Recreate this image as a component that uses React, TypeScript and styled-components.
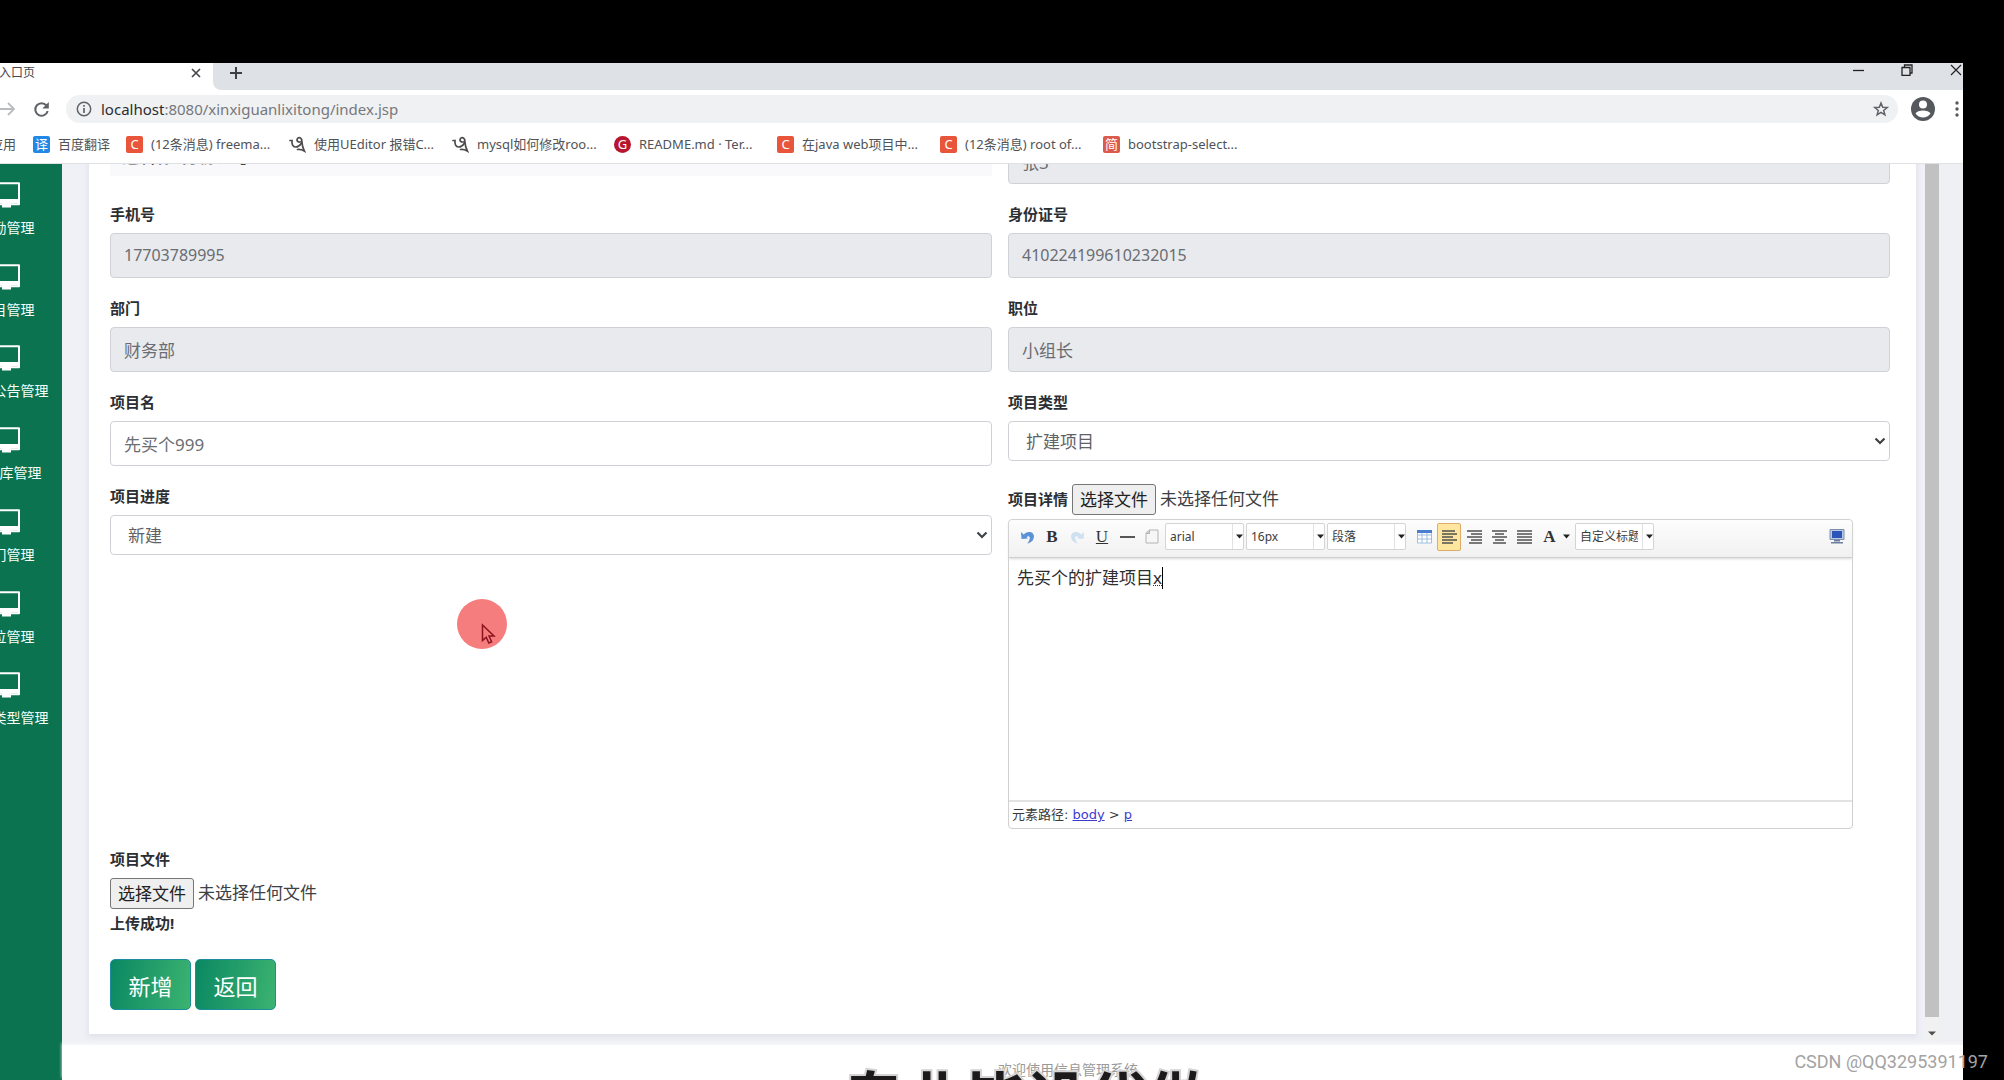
import React from "react";
import styled, { createGlobalStyle } from "styled-components";

const GlobalStyle = createGlobalStyle`
  *, *::before, *::after { box-sizing: border-box; }
  body {
    margin: 0;
    background: #000;
    font-family: "Noto Sans", "Noto Sans CJK SC", sans-serif;
    color: #212529;
  }
  button, input, select { font-family: inherit; margin: 0; }
`;

const Screen = styled.div`
  position: relative;
  height: 100vh;
  padding: 63px 41px 0 0;
  background: #000;
  overflow: hidden;
`;

const Browser = styled.div`
  display: flex;
  flex-direction: column;
  height: 100%;
  background: #fff;
  overflow: hidden;
`;

/* ---------- browser chrome ---------- */

const TabStrip = styled.div`
  display: flex;
  height: 27px;
  flex: none;
  background: #fff;
`;

const Tab = styled.div`
  display: flex;
  align-items: center;
  justify-content: space-between;
  width: 213px;
  padding: 0 9px 7px 0;
  background: #fff;
  font-size: 12px;
  line-height: 20px;
  color: #45484c;
  overflow: hidden;
`;

const TabTitle = styled.span`
  margin-left: -1px;
`;

const PlainButton = styled.button`
  display: flex;
  align-items: center;
  justify-content: center;
  padding: 0;
  border: 0;
  background: none;
  color: inherit;
`;

const StripRest = styled.div`
  display: flex;
  flex: 1;
  align-items: center;
  justify-content: space-between;
  padding: 0 1px 7px 16px;
  background: #dee1e6;
  border-bottom-left-radius: 8px;
  color: #3c4043;
`;

const WindowButtons = styled.div`
  display: flex;
  gap: 37px;
  padding-bottom: 6px;
`;

const AddressRow = styled.div`
  display: flex;
  align-items: center;
  flex: none;
  height: 38px;
  color: #5f6368;
`;

const NavButtons = styled.div`
  display: flex;
  align-items: center;
  gap: 17px;
  width: 66px;
`;

const AddressPill = styled.div`
  display: flex;
  align-items: center;
  flex: 1;
  gap: 9px;
  height: 28px;
  padding: 0 9px 0 10px;
  border-radius: 14px;
  background: #f0f1f3;
`;

const Url = styled.div`
  flex: 1;
  font-size: 15px;
  line-height: 24px;
  color: #75787c;

  b {
    font-weight: 400;
    color: #2b2d30;
  }
`;

const ProfileButtons = styled.div`
  display: flex;
  align-items: center;
  justify-content: space-between;
  width: 65px;
  padding: 0 4px 0 13px;
`;

const Bookmarks = styled.nav`
  display: flex;
  align-items: center;
  flex: none;
  height: 36px;
  padding-bottom: 3px;
  border-bottom: 1px solid #dfe1e5;
`;

const Bookmark = styled.a<{ $width: number }>`
  display: flex;
  align-items: center;
  gap: 8px;
  width: ${(p) => p.$width}px;
  font-size: 13px;
  line-height: 20px;
  color: #505357;
  text-decoration: none;
  white-space: nowrap;
`;

const AppsLink = styled(Bookmark)`
  margin-left: -10px;
`;

const SiteIcon = styled.span<{ $bg: string; $round?: boolean }>`
  display: flex;
  align-items: center;
  justify-content: center;
  flex: none;
  width: 17px;
  height: 17px;
  border-radius: ${(p) => (p.$round ? "9px" : "2px")};
  background: ${(p) => p.$bg};
  color: #fff;
  font-size: 13px;
  line-height: 16px;
`;

/* ---------- page ---------- */

const Page = styled.div`
  display: flex;
  flex: 1;
  min-height: 0;
`;

const Sidebar = styled.aside`
  display: flex;
  justify-content: flex-end;
  align-items: flex-start;
  flex: none;
  width: 62px;
  background: #0b7350;
  overflow: hidden;
`;

const Menu = styled.ul`
  display: grid;
  grid-template-rows: repeat(7, 1fr);
  flex: none;
  width: 111px;
  height: 589px;
  margin: 0;
  padding: 17px 0 0;
  list-style: none;
`;

const MenuLink = styled.a`
  display: flex;
  flex-direction: column;
  align-items: center;
  gap: 9px;
  padding-top: 1px;
  font-size: 14px;
  line-height: 22px;
  color: #f4fffa;
  text-decoration: none;
  white-space: nowrap;
`;

const Main = styled.main`
  display: flex;
  flex-direction: column;
  flex: 1;
  min-width: 0;
`;

const Panel = styled.div`
  display: flex;
  flex: 1;
  min-height: 0;
  background: #f0f1f6;
  overflow: hidden;
`;

const CardArea = styled.div`
  flex: 1;
  min-width: 0;
  padding: 0 9px 0 27px;
`;

const Card = styled.form`
  padding: 0 26px 24px 21px;
  background: #fff;
  box-shadow: 0 2px 6px 1px #dfe0e9;
`;

const ScrollTrack = styled.div`
  display: flex;
  flex-direction: column;
  flex: none;
  width: 14px;
  background: #f1f1f2;
`;

const ScrollThumb = styled.div`
  flex: 1;
  background: #c1c1c1;
`;

const ScrollArrow = styled.div`
  display: flex;
  align-items: center;
  justify-content: center;
  height: 28px;
  padding-top: 4px;
`;

const Gutter = styled.div`
  flex: none;
  width: 24px;
  background: #eff0f3;
`;

const Rows = styled.div`
  display: grid;
  grid-template-columns: 1fr 1fr;
  gap: 18px 16px;
  margin-top: -56px;
`;

const Field = styled.div`
  min-width: 0;
`;

const Label = styled.label`
  display: block;
  margin-bottom: 7px;
  font-size: 15px;
  line-height: 24px;
  font-weight: 700;
  color: #2b2e33;
`;

const TextInput = styled.input<{ $digits?: boolean }>`
  display: block;
  width: 100%;
  height: 45px;
  padding: 0 13px 1px;
  border: 1px solid #ced1d6;
  border-radius: 4px;
  background: #fff;
  font-size: ${(p) => (p.$digits ? 16 : 17)}px;
  line-height: 24px;
  color: #6a6d72;
  outline: none;

  &:read-only { background: #e8eaee; }
`;

const SelectBox = styled.div`
  position: relative;

  svg {
    position: absolute;
    right: 4px;
    top: 15px;
    pointer-events: none;
  }
`;

const Select = styled.select`
  appearance: none;
  display: block;
  width: 100%;
  height: 40px;
  padding: 0 17px;
  border: 1px solid #ced1d6;
  border-radius: 4px;
  background: #fff;
  font-size: 17px;
  color: #5f6267;
`;

const Heading = styled.h4`
  height: 68px;
  margin: 0;
  padding: 37px 12px 0;
  background: #f9f9fc;
  font-size: 17px;
  line-height: 24px;
  font-weight: 500;
  color: #43464b;
`;

const FileLine = styled.div`
  display: flex;
  align-items: center;
  gap: 4px;
  height: 30px;
  font-size: 17px;
  line-height: 24px;
  color: #3e4044;
`;

const InlineLabel = styled(Label)`
  margin: 0;
`;

const HiddenFile = styled.input`
  position: absolute;
  width: 1px;
  height: 1px;
  opacity: 0;
`;

const FileButton = styled.label`
  padding: 2px 7px;
  border: 1px solid #767676;
  border-radius: 3px;
  background: #efefef;
  font-size: 17px;
  line-height: 25px;
  color: #222;
`;

/* ---------- rich text editor ---------- */

const Editor = styled.div`
  display: flex;
  flex-direction: column;
  width: 845px;
  max-width: 100%;
  height: 310px;
  margin-top: 5px;
  border: 1px solid #d0d0d0;
  border-radius: 4px;
  background: #fff;
`;

const Toolbar = styled.div`
  display: flex;
  align-items: center;
  flex: none;
  height: 38px;
  padding: 0 2px 4px 6px;
  border-bottom: 1px solid #d0d0d0;
  border-radius: 4px 4px 0 0;
  background: linear-gradient(#fdfdfd, #f1f1f1);
  box-shadow: 0 1px 3px #d8d8d8;
`;

const Tool = styled(PlainButton)<{ $active?: boolean }>`
  flex: none;
  width: 24px;
  height: 28px;
  margin-right: 1px;
  border: 1px solid ${(p) => (p.$active ? "#dcac6c" : "transparent")};
  border-radius: 2px;
  background: ${(p) => (p.$active ? "#ffe69f" : "none")};
  color: #333;
  font: 700 17px "Liberation Serif", serif;

  u { font-weight: 400; }
`;

const ColorTool = styled(Tool)`
  width: 37px;
  gap: 7px;
  padding-left: 2px;
`;

const ToolGap = styled.span`
  flex: none;
  width: 4px;
`;

const Combo = styled.div`
  position: relative;
  flex: none;
  width: 79px;
  height: 27px;
  margin-right: 2px;
  border: 1px solid #d4d4d4;
  border-radius: 2px;
  background: #fff;

  svg {
    position: absolute;
    right: 0;
    top: 10px;
    pointer-events: none;
  }
`;

const ComboSelect = styled.select`
  appearance: none;
  width: 67px;
  height: 25px;
  padding: 0 4px;
  border: 0;
  border-right: 1px solid #e2e2e2;
  background: none;
  font-size: 12px;
  color: #3c3c3c;
`;

const Spring = styled.span`
  flex: 1;
`;

const EditorBody = styled.div`
  flex: 1;
  padding: 7px 8px;
  font-size: 17px;
  line-height: 26px;
  color: #2e2e2e;

  p { margin: 0; display: flex; align-items: center; }
  u { text-decoration-style: dotted; text-decoration-thickness: 1px; }
`;

const Caret = styled.span`
  width: 1px;
  height: 22px;
  background: #000;
`;

const PathBar = styled.div`
  flex: none;
  height: 28px;
  padding: 0 3px;
  border-top: 2px solid #e2e2e2;
  font: 13px/26px "DejaVu Sans", "Noto Sans CJK SC", sans-serif;
  color: #3a3a3a;

  a { color: #3d3ad0; }
`;

const FileMessage = styled.div`
  margin: 3px 0 24px;
  font-size: 15px;
  line-height: 24px;
  font-weight: 700;
  color: #2b2e33;
`;

const Actions = styled.div`
  display: flex;
  gap: 4px;
`;

const ActionButton = styled.button`
  width: 81px;
  height: 51px;
  padding: 0;
  border: 1px solid #1c8d9c;
  border-radius: 5px;
  background: linear-gradient(100deg, #0a8862, #3cb371);
  font-size: 22px;
  color: #fff;
`;

const Footer = styled.footer`
  flex: none;
  height: 35px;
  padding-top: 14px;
  padding-left: 111px;
  text-align: center;
  font-size: 14px;
  line-height: 22px;
  color: #999;
  box-shadow: 0 -2px 3px #f7f7fa;
`;

/* ---------- screen overlays ---------- */

const Pointer = styled.div`
  position: absolute;
  left: 457px;
  top: 599px;
  width: 50px;
  height: 50px;
  border-radius: 50%;
  background: #f57d7d;

  svg { position: absolute; left: 24px; top: 24px; }
`;

const Caption = styled.div`
  position: absolute;
  left: 843px;
  top: 1065px;
  font: 700 61px/64px "Noto Sans CJK SC", sans-serif;
  color: #1c1a1b;
  white-space: nowrap;
  -webkit-text-stroke: 4px #d4d4d4;
  paint-order: stroke fill;
`;

const Watermark = styled.div`
  position: absolute;
  right: 16px;
  bottom: 5px;
  font: 18px/26px Roboto, sans-serif;
  color: #a3a3a3;
`;

/* ---------- icons ---------- */

const Monitor = () => (
  <svg width="29" height="26" viewBox="0 0 29 26" fill="none">
    <path d="M2 1.2h25v21H2z" stroke="#fff" strokeWidth="2" strokeLinejoin="round" />
    <path d="M1 17h27v4.500H1zM10 21h9v4.500h-9z" fill="#fff" />
  </svg>
);

const Chevron = () => (
  <svg width="12" height="10" viewBox="0 0 12 10" fill="none" stroke="#3f4246" strokeWidth="2.200">
    <path d="M1.500 2.500L6 7l4.500-4.500" />
  </svg>
);

const Down = () => (
  <svg width="7" height="5" viewBox="0 0 7 5"><path d="M0 .5h7L3.500 4.500z" fill="#222" /></svg>
);

const Lines = ({ rows }: { rows: number[][] }) => (
  <svg width="15" height="14" viewBox="0 0 15 14" stroke="#444" strokeWidth="1.400">
    {rows.map(([a, b], i) => (
      <path key={i} d={`M${a} ${1 + i * 3}H${b}`} />
    ))}
  </svg>
);

const Knot = () => (
  <svg width="17" height="17" viewBox="0 0 17 17" fill="none" stroke="#4b4b4d" strokeWidth="1.700" strokeLinecap="round">
    <path d="M1 4.500h2c-.4 3.500.8 6.500 3.500 6.500 2.500 0 4.500-1.500 6-4" />
    <path d="M12.800 6.500c.3-3-.8-5-2.800-4.800-2 .2-2.600 2.700-1.200 3.800 1.300 1 3.200.4 4-.5.3 4 1 7 2.500 10-2.300-1.300-4.300-1.800-6.800-1.500" />
  </svg>
);

const Undo = ({ color, flip }: { color: string; flip?: boolean }) => (
  <svg width="15" height="14" viewBox="0 0 15 14" fill="none">
    <g transform={flip ? "translate(15 0) scale(-1 1)" : undefined}>
      <path d="M4 5c2.500-3.500 9-3.500 9.300 1 .2 3-2 5.500-4.500 6.500 1.200-1.800 2.200-3.700 1.500-5.500C9.500 5 7 5.500 5.500 7.500" fill={color} stroke={color} strokeWidth="1.200" />
      <path d="M1 2l.5 7L8 8.500z" fill={color} />
    </g>
  </svg>
);

const bookmarks: { text: string; icon: React.ReactNode; width: number }[] = [
  { text: "百度翻译", width: 93, icon: <SiteIcon $bg="#2288e6">译</SiteIcon> },
  { text: "(12条消息) freema...", width: 163, icon: <SiteIcon $bg="#e8553a">C</SiteIcon> },
  { text: "使用UEditor 报错C...", width: 163, icon: <Knot /> },
  { text: "mysql如何修改roo...", width: 162, icon: <Knot /> },
  { text: "README.md · Ter...", width: 163, icon: <SiteIcon $bg="#b8152f" $round>G</SiteIcon> },
  { text: "在java web项目中...", width: 163, icon: <SiteIcon $bg="#e8553a">C</SiteIcon> },
  { text: "(12条消息) root of...", width: 163, icon: <SiteIcon $bg="#e8553a">C</SiteIcon> },
  { text: "bootstrap-select...", width: 163, icon: <SiteIcon $bg="#dc5a4c">简</SiteIcon> },
];

const menu = ["奖励管理", "项目管理", "通知公告管理", "资料库管理", "部门管理", "职位管理", "项目类型管理"];

const ComboBox = ({ label, value }: { label: string; value: string }) => (
  <Combo>
    <ComboSelect aria-label={label}>
      <option>{value}</option>
    </ComboSelect>
    <Down />
  </Combo>
);

const Chrome = () => (
  <>
    <TabStrip>
      <Tab>
        <TabTitle>入口页</TabTitle>
        <PlainButton aria-label="关闭标签页">
          <svg width="16" height="12" viewBox="0 0 16 12" stroke="#45484c" strokeWidth="1.700">
            <path d="M4 2l8 8M12 2l-8 8" />
          </svg>
        </PlainButton>
      </Tab>
      <StripRest>
        <PlainButton aria-label="新标签页">
          <svg width="14" height="14" viewBox="0 0 14 14" stroke="#3c4043" strokeWidth="2">
            <path d="M7 1v12M1 7h12" />
          </svg>
        </PlainButton>
        <WindowButtons>
          <PlainButton aria-label="最小化">
            <svg width="12" height="12" viewBox="0 0 12 12" stroke="#222" strokeWidth="1.300"><path d="M1 6.500h11" /></svg>
          </PlainButton>
          <PlainButton aria-label="还原">
            <svg width="12" height="12" viewBox="0 0 12 12" fill="none" stroke="#222" strokeWidth="1.300">
              <path d="M1 3.500h8v8H1zM3.500 3.500V1H11v8H9" />
            </svg>
          </PlainButton>
          <PlainButton aria-label="关闭">
            <svg width="12" height="12" viewBox="0 0 12 12" stroke="#222" strokeWidth="1.200"><path d="M1 1l10 10M11 1L1 11" /></svg>
          </PlainButton>
        </WindowButtons>
      </StripRest>
    </TabStrip>
    <AddressRow>
      <NavButtons>
        <PlainButton aria-label="前进">
          <svg width="16" height="16" viewBox="0 0 16 16" fill="none" stroke="#b9bbbe" strokeWidth="1.800">
            <path d="M0 8h14M8 2l6 6-6 6" />
          </svg>
        </PlainButton>
        <PlainButton aria-label="重新加载">
          <svg width="17" height="17" viewBox="0 0 17 17" fill="none" stroke="#5f6368" strokeWidth="2">
            <path d="M13.500 4.500A6.300 6.300 0 1 0 14.700 10" />
            <path d="M15.800 1v6.500H9.300z" fill="#5f6368" stroke="none" />
          </svg>
        </PlainButton>
      </NavButtons>
      <AddressPill>
        <svg width="16" height="16" viewBox="0 0 16 16" fill="none" stroke="#5f6368" strokeWidth="1.500">
          <circle cx="8" cy="8" r="6.700" />
          <path d="M8 7v5M8 4v1.700" strokeWidth="1.700" />
        </svg>
        <Url><b>localhost</b>:8080/xinxiguanlixitong/index.jsp</Url>
        <PlainButton aria-label="收藏">
          <svg width="16" height="16" viewBox="0 0 16 16" fill="none" stroke="#5f6368" strokeWidth="1.500">
            <path d="M8 2l1.700 4.200 4.500.3-3.500 2.900 1.200 4.400L8 11.300l-3.900 2.500 1.200-4.400L1.800 6.500l4.500-.3z" />
          </svg>
        </PlainButton>
      </AddressPill>
      <ProfileButtons>
        <PlainButton aria-label="用户">
          <svg width="24" height="24" viewBox="0 0 24 24">
            <circle cx="12" cy="12" r="12" fill="#55585c" />
            <circle cx="12" cy="7.500" r="4" fill="#fff" />
            <path d="M4.500 16.500c2-4 13-4 15 0-3.500 5.300-11.500 5.300-15 0z" fill="#fff" />
          </svg>
        </PlainButton>
        <PlainButton aria-label="菜单">
          <svg width="4" height="16" viewBox="0 0 4 16" fill="#55585c">
            <circle cx="2" cy="2" r="1.700" /><circle cx="2" cy="8" r="1.700" /><circle cx="2" cy="14" r="1.700" />
          </svg>
        </PlainButton>
      </ProfileButtons>
    </AddressRow>
    <Bookmarks>
      <AppsLink href="#" $width={43}>应用</AppsLink>
      {bookmarks.map((b) => (
        <Bookmark key={b.text} href="#" $width={b.width}>
          {b.icon}
          {b.text}
        </Bookmark>
      ))}
    </Bookmarks>
  </>
);

const RichEditor = () => (
  <Editor>
    <Toolbar>
      <Tool type="button" aria-label="撤销"><Undo color="#5a92d8" /></Tool>
      <Tool type="button" aria-label="加粗">B</Tool>
      <Tool type="button" aria-label="重做"><Undo color="#cfe0f0" flip /></Tool>
      <Tool type="button" aria-label="下划线"><u>U</u></Tool>
      <Tool type="button" aria-label="分隔线">
        <svg width="15" height="4" viewBox="0 0 15 4" stroke="#222" strokeWidth="1.500"><path d="M0 2h15" /></svg>
      </Tool>
      <Tool type="button" aria-label="清空文档">
        <svg width="14" height="15" viewBox="0 0 14 15" fill="#f6f6f6" stroke="#b4b4b4">
          <path d="M1 4l3.500-3H13v13H1z" /><path d="M1 4.500h3.500V1" fill="#ccc" />
        </svg>
      </Tool>
      <ComboBox label="字体" value="arial" />
      <ComboBox label="字号" value="16px" />
      <ComboBox label="段落格式" value="段落" />
      <ToolGap />
      <Tool type="button" aria-label="表格">
        <svg width="15" height="14" viewBox="0 0 15 14" fill="#fff" stroke="#9dbfe0">
          <path d="M.5 1h14v12H.5zM.5 5h14M.5 9h14M5 3v10M10 3v10" />
          <path d="M0 1.500h15" stroke="#4a7fd0" strokeWidth="3" />
        </svg>
      </Tool>
      <Tool type="button" aria-label="居左对齐" $active><Lines rows={[[0, 13], [0, 15], [0, 11], [0, 15], [0, 11]]} /></Tool>
      <Tool type="button" aria-label="居右对齐"><Lines rows={[[0, 15], [4, 15], [0, 15], [4, 15], [2, 15]]} /></Tool>
      <Tool type="button" aria-label="居中对齐"><Lines rows={[[0, 15], [3, 12], [0, 15], [3, 12], [1, 14]]} /></Tool>
      <Tool type="button" aria-label="两端对齐"><Lines rows={[[0, 15], [0, 15], [0, 15], [0, 15], [0, 15]]} /></Tool>
      <ColorTool type="button" aria-label="字体颜色">A<Down /></ColorTool>
      <ComboBox label="自定义标题" value="自定义标题" />
      <Spring />
      <Tool type="button" aria-label="全屏">
        <svg width="16" height="15" viewBox="0 0 16 15">
          <path d="M1 .5h14v10H1z" fill="#bcc9e0" stroke="#7c8fae" />
          <path d="M3 2h10v7H3z" fill="#2b55b8" />
          <path d="M5 11h6v1.500H5zM2 13h12v1.500H2z" fill="#6d7f9c" />
        </svg>
      </Tool>
    </Toolbar>
    <EditorBody>
      <p>先买个的扩建项目<u>x</u><Caret /></p>
    </EditorBody>
    <PathBar>
      元素路径: <a href="#">body</a> &gt; <a href="#">p</a>
    </PathBar>
  </Editor>
);

export default function App() {
  return (
    <Screen>
      <GlobalStyle />
      <Browser>
        <Chrome />
        <Page>
          <Sidebar>
            <Menu>
              {menu.map((m) => (
                <li key={m}>
                  <MenuLink href="#"><Monitor />{m}</MenuLink>
                </li>
              ))}
            </Menu>
          </Sidebar>
          <Main>
            <Panel>
              <CardArea>
                <Card onSubmit={(e) => e.preventDefault()}>
                  <Rows>
                    <Heading>选名称: 身份证号</Heading>
                    <Field>
                      <Label htmlFor="name">姓名</Label>
                      <TextInput id="name" readOnly defaultValue="张3" />
                    </Field>
                    <Field>
                      <Label htmlFor="phone">手机号</Label>
                      <TextInput id="phone" $digits readOnly defaultValue="17703789995" />
                    </Field>
                    <Field>
                      <Label htmlFor="idcard">身份证号</Label>
                      <TextInput id="idcard" $digits readOnly defaultValue="410224199610232015" />
                    </Field>
                    <Field>
                      <Label htmlFor="dept">部门</Label>
                      <TextInput id="dept" readOnly defaultValue="财务部" />
                    </Field>
                    <Field>
                      <Label htmlFor="post">职位</Label>
                      <TextInput id="post" readOnly defaultValue="小组长" />
                    </Field>
                    <Field>
                      <Label htmlFor="project">项目名</Label>
                      <TextInput id="project" defaultValue="先买个999" />
                    </Field>
                    <Field>
                      <Label htmlFor="type">项目类型</Label>
                      <SelectBox>
                        <Select id="type"><option>扩建项目</option></Select>
                        <Chevron />
                      </SelectBox>
                    </Field>
                    <Field>
                      <Label htmlFor="progress">项目进度</Label>
                      <SelectBox>
                        <Select id="progress"><option>新建</option></Select>
                        <Chevron />
                      </SelectBox>
                    </Field>
                    <Field>
                      <FileLine>
                        <InlineLabel htmlFor="detail">项目详情</InlineLabel>
                        <HiddenFile id="detail" type="file" />
                        <FileButton htmlFor="detail">选择文件</FileButton>
                        <span>未选择任何文件</span>
                      </FileLine>
                      <RichEditor />
                    </Field>
                    <Field>
                      <Label htmlFor="file">项目文件</Label>
                      <FileLine>
                        <HiddenFile id="file" type="file" />
                        <FileButton htmlFor="file">选择文件</FileButton>
                        <span>未选择任何文件</span>
                      </FileLine>
                      <FileMessage>上传成功!</FileMessage>
                      <Actions>
                        <ActionButton type="submit">新增</ActionButton>
                        <ActionButton type="button">返回</ActionButton>
                      </Actions>
                    </Field>
                  </Rows>
                </Card>
              </CardArea>
              <ScrollTrack>
                <ScrollThumb />
                <ScrollArrow>
                  <svg width="8" height="5" viewBox="0 0 8 5"><path d="M0 .5h8L4 4.500z" fill="#505050" /></svg>
                </ScrollArrow>
              </ScrollTrack>
              <Gutter />
            </Panel>
            <Footer>欢迎使用信息管理系统</Footer>
          </Main>
        </Page>
      </Browser>
      <Pointer>
        <svg width="16" height="24" viewBox="0 0 16 24" fill="none" stroke="#8c1420" strokeWidth="1.500">
          <path d="M1.500 2v15.500l3.700-3.300 2.600 5.800 2.800-1.200L8 13h5z" />
        </svg>
      </Pointer>
      <Caption>专业毕设代做</Caption>
      <Watermark>CSDN @QQ3295391197</Watermark>
    </Screen>
  );
}
